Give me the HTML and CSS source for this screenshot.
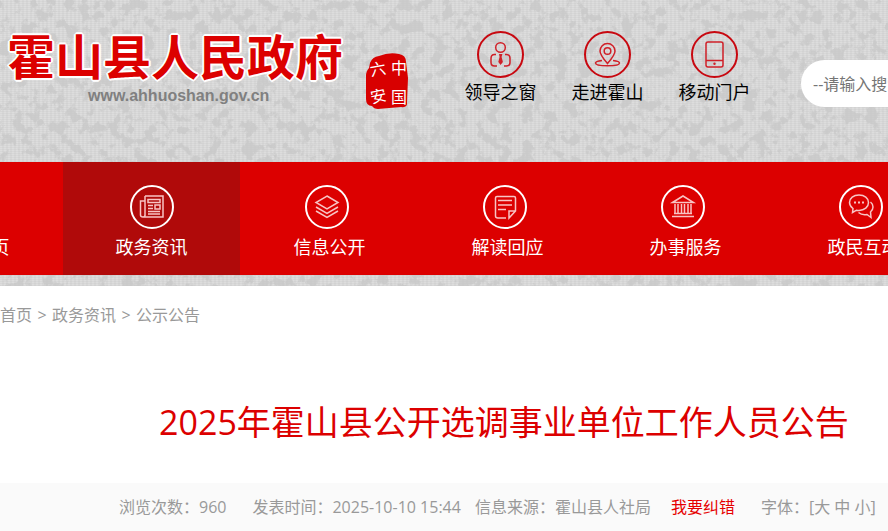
FILE: index.html
```html
<!DOCTYPE html>
<html lang="zh-CN">
<head>
<meta charset="utf-8">
<title>2025年霍山县公开选调事业单位工作人员公告</title>
<link rel="stylesheet" href="styles.css">
</head>
<body>
<div class="banner">
  <svg class="texture" aria-hidden="true">
    <defs>
      <filter id="damask" x="0" y="0" width="100%" height="100%" color-interpolation-filters="sRGB">
        <feTurbulence type="fractalNoise" baseFrequency="0.09" numOctaves="5" seed="21"/>
        <feColorMatrix values="0 0 0 0 0.78  0 0 0 0 0.78  0 0 0 0 0.78  9 0 0 0 -4.5"/>
      </filter>
      <pattern id="weave" width="4" height="2" patternUnits="userSpaceOnUse">
        <path d="M0 0h2v1h-2z" fill="#dddddd"/>
        <path d="M2 1h2v1h-2z" fill="#d2d2d2"/>
      </pattern>
    </defs>
    <rect width="100%" height="100%" fill="#d7d7d7"/>
    <rect width="100%" height="100%" fill="url(#weave)"/>
    <rect width="100%" height="100%" filter="url(#damask)" opacity=".7"/>
  </svg>
  <header class="header">
    <div class="brand">
      <div class="brand-name">霍山县人民政府</div>
      <div class="brand-url">www.ahhuoshan.gov.cn</div>
    </div>
    <svg class="seal" viewBox="0 0 44 58" role="img" aria-label="中国六安">
      <path d="M5 11Q7 5 14 4Q24 0 34 2Q41 3 41 10L43 26L42 50Q43 56 36 55L13 57Q9 57 7 54Q1 54 1 47L1 24Q1 19 4 16Z" fill="#d80000"/>
      <g class="seal-text">
        <text x="5" y="23" transform="rotate(-10 13 18)">六</text>
        <text x="5" y="50" transform="rotate(-12 13 43)">安</text>
        <text x="26" y="22">中</text>
        <text x="26" y="51">国</text>
      </g>
    </svg>
    <nav class="quick">
      <a href="#">
        <svg viewBox="0 0 47 47"><circle class="ring" cx="23.500" cy="23.500" r="22.500"/><circle cx="23.500" cy="16.500" r="4.800"/><path d="M19 23.500h-1.500q-3.500 0-3.500 4v4q0 3.500 3.500 3.500H20M28 23.500h1.500q3.500 0 3.500 4v4q0 3.500-3.500 3.500H27"/><path class="solid" d="M22 23h3.400l-.8 3 1.300 5-2.300 3-2.300-3 1.300-5z"/></svg>
        <span>领导之窗</span>
      </a>
      <a href="#">
        <svg viewBox="0 0 47 47"><circle class="ring" cx="23.500" cy="23.500" r="22.500"/><path d="M23.500 32.500Q16 24 16 20a7.500 7.500 0 0 1 15 0q0 4-7.500 12.500z"/><circle cx="23.500" cy="20" r="3.300"/><path d="M18 29.500c-4 .5-6.500 1.500-6.500 2.500 0 1.800 5 2.800 12 2.800s12-1 12-2.800c0-1-2.500-2-6.500-2.500"/></svg>
        <span>走进霍山</span>
      </a>
      <a href="#">
        <svg viewBox="0 0 47 47"><circle class="ring" cx="23.500" cy="23.500" r="22.500"/><rect x="15" y="11" width="17" height="25" rx="2"/><path d="M15 29.500h17"/><circle class="solid" cx="23.500" cy="32.700" r="1.200"/></svg>
        <span>移动门户</span>
      </a>
    </nav>
    <form class="search"><input type="search" aria-label="搜索" placeholder="--请输入搜索"></form>
  </header>
  <nav class="main-nav">
    <a href="#" class="home"><span class="icon-space"></span><span>首页</span></a>
    <a href="#" class="active">
      <svg viewBox="0 0 46 46"><circle class="ring" cx="23" cy="23" r="21"/><path d="M16 12h18v21H14q-2.500 0-2.500-2V17H16v14q0 2-2 2M16 12v20M19 15.500h12v3H19zM26 21h5v4h-5zM19 21.500h5M19 24.500h5M19 27.500h12M19 30h12"/></svg>
      <span>政务资讯</span>
    </a>
    <a href="#">
      <svg viewBox="0 0 46 46"><circle class="ring" cx="23" cy="23" r="21"/><path d="M23 12l11 6.500-11 6.500-11-6.500zM12 23l11 6.500L34 23M12 27l11 6.500L34 27"/></svg>
      <span>信息公开</span>
    </a>
    <a href="#">
      <svg viewBox="0 0 46 46"><circle class="ring" cx="23" cy="23" r="21"/><path d="M24 34H16q-2.500 0-2.500-2V14q0-1.500 1.500-1.500h17q1.500 0 1.500 1.500V27l-6.500 7v-7h6.500M16 16.500h14M16 21h14M16 25.500h8"/></svg>
      <span>解读回应</span>
    </a>
    <a href="#">
      <svg viewBox="0 0 46 46"><circle class="ring" cx="23" cy="23" r="21"/><path d="M12.500 18.500L23 12l10.500 6.500zM14 29.500h18M12 32.500h22M15 20v9M18 20v9M21.500 20v9M24.500 20v9M28 20v9M31 20v9"/></svg>
      <span>办事服务</span>
    </a>
    <a href="#">
      <svg viewBox="0 0 46 46"><circle class="ring" cx="23" cy="23" r="21"/><path d="M14.500 28.500l.5-4q-3.500-2.500-3.500-6c0-4.500 4-7.500 9.500-7.500s9.500 3 9.500 7.500-4 8-9.500 8q-1.500 0-2.500-.3zM32.500 18q2.500 2 2.500 5 0 3-2.500 5l.5 5.500-4-3q-5 1-8.500-2"/><path class="dots" d="M16 18.500h2M20 18.500h2M24 18.500h2"/></svg>
      <span>政民互动</span>
    </a>
  </nav>
</div>
<main>
  <nav class="crumbs" aria-label="当前位置">
    <a href="#">首页</a><span>&gt;</span><a href="#">政务资讯</a><span>&gt;</span><a href="#">公示公告</a>
  </nav>
  <h1 class="title">2025年霍山县公开选调事业单位工作人员公告</h1>
  <div class="meta">
    <span class="views">浏览次数：960</span>
    <span class="date">发表时间：2025-10-10 15:44</span>
    <span class="source">信息来源：霍山县人社局</span>
    <a class="report" href="#">我要纠错</a>
    <span>字体：[<button type="button">大</button> <button type="button">中</button> <button type="button">小</button>]</span>
  </div>
</main>
</body>
</html>
```

FILE: styles.css
```css
* {
  box-sizing: border-box;
}

body {
  margin: 0;
  overflow: hidden;
  background: #fff;
  color: #999;
  font: 16px/24px "Open Sans", "Noto Sans CJK SC", sans-serif;
}

a {
  color: inherit;
  text-decoration: none;
}

svg {
  fill: none;
}

.banner {
  position: relative;
  padding-bottom: 11px;
}

.texture {
  position: absolute;
  inset: 0;
  width: 100%;
  height: 100%;
  z-index: -1;
}

.header {
  display: flex;
  align-items: flex-start;
  height: 162px;
  padding-left: 7px;
  overflow: hidden;
}

.brand {
  flex: none;
  width: 336px;
  padding-top: 30px;
}

.brand-name {
  color: #dc0000;
  font-size: 48px;
  font-weight: 700;
  line-height: 54px;
  white-space: nowrap;
  text-shadow: 2px 0 #fff, -2px 0 #fff, 0 2px #fff, 0 -2px #fff,
    1px 1px #fff, -1px 1px #fff, 1px -1px #fff, -1px -1px #fff,
    0 0 3px #fff;
}

.brand-url {
  padding-left: 81px;
  color: #808080;
  font: 700 16px/24px "Liberation Sans", sans-serif;
}

.seal {
  flex: none;
  width: 44px;
  height: 58px;
  margin: 52px 0 0 22px;
}

.seal-text {
  fill: #fff;
  font: 16px "Noto Sans CJK SC", sans-serif;
}

.quick {
  display: flex;
  flex: none;
  margin: 31px 0 0 38px;
}

.quick a {
  display: flex;
  flex-direction: column;
  align-items: center;
  width: 107px;
  color: #000;
  font-size: 18px;
  line-height: 28px;
}

.quick svg {
  width: 47px;
  height: 47px;
  stroke: #d02028;
  stroke-width: 1.5;
}

.quick .ring {
  stroke: #c80810;
  stroke-width: 2;
}

.quick .solid {
  fill: #d02028;
  stroke: none;
}

.search {
  flex: none;
  margin: 60px 0 0 33px;
}

.search input {
  width: 300px;
  height: 47px;
  padding: 0 12px;
  border: 0;
  border-radius: 24px;
  background: #fff;
  color: #333;
  font: inherit;
}

.search input::placeholder {
  color: #757575;
}

.main-nav {
  display: flex;
  gap: 1px;
  height: 113px;
  padding-left: 63px;
  overflow: hidden;
  background: #dc0000;
}

.main-nav a {
  display: flex;
  flex: none;
  flex-direction: column;
  align-items: center;
  width: 177px;
  padding-top: 22px;
  color: #fff;
  font-size: 18px;
  line-height: 34px;
}

.main-nav .home {
  width: 141px;
  margin-left: -142px;
}

.main-nav .active {
  background: #b00a0a;
}

.main-nav svg,
.icon-space {
  width: 46px;
  height: 46px;
  margin-right: 5px;
  stroke: #f8c4c4;
  stroke-width: 1.5;
}

.main-nav .active svg {
  margin-right: 0;
}

.main-nav .ring {
  stroke: #fff;
  stroke-width: 2;
}

.main-nav .dots {
  stroke-width: 2;
}

.crumbs {
  display: flex;
  padding-top: 17px;
}

.crumbs span {
  width: 20px;
  text-align: center;
}

.title {
  margin: 0;
  padding: 70px 0 36px 120px;
  color: #dc0000;
  font-size: 34px;
  font-weight: 400;
  line-height: 50px;
  text-align: center;
  white-space: nowrap;
}

.meta {
  display: flex;
  height: 60px;
  padding: 12px 0 0 119px;
  background: #fafafa;
  white-space: nowrap;
}

.views,
.report {
  margin-right: 26px;
}

.date {
  margin-right: 14px;
}

.source {
  margin-right: 20px;
}

.report {
  color: #e60000;
}

.meta button {
  padding: 0;
  border: 0;
  background: none;
  color: inherit;
  font: inherit;
  cursor: pointer;
}
```
